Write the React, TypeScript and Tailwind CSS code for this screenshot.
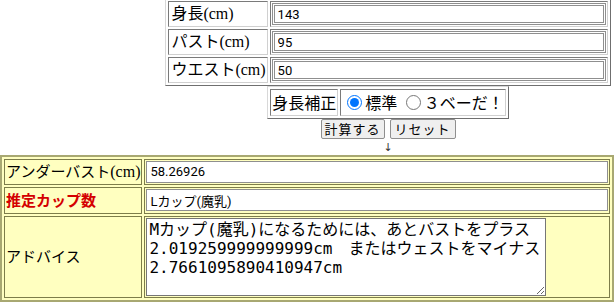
import type { ReactNode } from 'react'

const serifJa = "font-['Liberation_Serif','Noto_Sans_CJK_JP',serif]"

function SizeRow({ label, value }: { label: string; value: string }) {
  return (
    <tr>
      <td className="border border-t-[#7a7a7a] border-l-[#7a7a7a] border-b-[#d0d0d0] border-r-[#d0d0d0] p-px pl-[2px] text-[16px] leading-[22px] text-black whitespace-nowrap">
        {label}
      </td>
      <td className="border border-t-[#7a7a7a] border-l-[#7a7a7a] border-b-[#d0d0d0] border-r-[#d0d0d0] p-px">
        <input
          readOnly
          value={value}
          className="block h-[22px] w-[334px] border-[3px] border-double border-[#8f8f8f] bg-white px-[3px] font-['Roboto',sans-serif] text-[13px] text-black outline-none"
        />
      </td>
    </tr>
  )
}

function ResultRow({ label, children }: { label: ReactNode; children: ReactNode }) {
  return (
    <tr>
      <td className="border border-[#7d7d4a] bg-[#ffffc0] p-px pl-px text-[15px] leading-[22px] text-black whitespace-nowrap">
        {label}
      </td>
      <td className="w-full border border-[#7d7d4a] bg-[#ffffc0] p-px">{children}</td>
    </tr>
  )
}

export default function App() {
  return (
    <div className={`h-[305px] w-[614px] overflow-hidden bg-white ${serifJa}`}>
      <div className="-mt-[2px] ml-[166px] flex w-[444px] flex-col items-center">
        <table className="w-full border-separate border-spacing-[2px] border border-t-[#d8d8d8] border-l-[#d8d8d8] border-b-[#6f6f6f] border-r-[#6f6f6f]">
          <tbody>
            <SizeRow label="身長(cm)" value="143" />
            <SizeRow label="パスト(cm)" value="95" />
            <SizeRow label="ウエスト(cm)" value="50" />
          </tbody>
        </table>

        <table className="border-separate border-spacing-[2px] border border-t-[#d8d8d8] border-l-[#d8d8d8] border-b-[#6f6f6f] border-r-[#6f6f6f] font-['Noto_Sans_CJK_JP',sans-serif] text-[16px] leading-[22px]">
          <tbody>
            <tr>
              <td className="border border-t-[#7a7a7a] border-l-[#7a7a7a] border-b-[#d0d0d0] border-r-[#d0d0d0] px-px py-px whitespace-nowrap">
                身長補正
              </td>
              <td className="border border-t-[#7a7a7a] border-l-[#7a7a7a] border-b-[#d0d0d0] border-r-[#d0d0d0] px-px py-px whitespace-nowrap">
                <label className="inline-flex items-center">
                  <input type="radio" name="hosei" defaultChecked className="ml-[5px] mr-[3px] h-[15px] w-[15px] accent-[#0075ff]" />
                  標準
                </label>{' '}
                <label className="inline-flex items-center">
                  <input type="radio" name="hosei" className="ml-[5px] mr-[3px] h-[15px] w-[15px]" />
                  ３ベーだ！
                </label>
              </td>
            </tr>
          </tbody>
        </table>

        <div className="flex gap-[5px] font-['Noto_Sans_CJK_JP',sans-serif] text-[13px]">
          <button className="h-[20px] w-[64px] rounded-[2px] border border-[#8f8f8f] bg-[#efefef] leading-[18px] tracking-[1px] text-black">
            計算する
          </button>
          <button className="h-[20px] w-[66px] rounded-[2px] border border-[#8f8f8f] bg-[#efefef] leading-[18px] tracking-[1px] text-black">
            リセット
          </button>
        </div>

        <div className="h-[16px] font-['DejaVu_Sans',sans-serif] text-[11px] leading-[18px] text-[#333]">↓</div>
      </div>

      <table className="w-full border-separate border-spacing-[2px] border-[2px] border-[#a8a872] bg-[#ffffc0]">
        <tbody>
          <ResultRow
            label={
              <>
                アンダーバスト<span className="text-[16px]">(cm)</span>
              </>
            }
          >
            <input
              readOnly
              value="58.26926"
              className="block h-[22px] w-full border border-[#8f8f8f] bg-white px-[3px] font-['Roboto',sans-serif] text-[13px] text-black outline-none"
            />
          </ResultRow>
          <ResultRow
            label={
              <span className="font-['Noto_Sans_CJK_JP',sans-serif] font-bold text-[#d40000]">推定カップ数</span>
            }
          >
            <input
              readOnly
              value="Lカップ(魔乳)"
              className="block h-[22px] w-full border border-[#8f8f8f] bg-white px-[3px] font-['Roboto','Noto_Sans_CJK_JP',sans-serif] text-[13px] text-black outline-none"
            />
          </ResultRow>
          <ResultRow label="アドバイス">
            <textarea
              readOnly
              value={'Mカップ(魔乳)になるためには、あとバストをプラス\n2.019259999999999cm　またはウェストをマイナス\n2.7661095890410947cm'}
              className="block h-[78px] w-[400px] resize-y border border-[#767676] bg-white px-[2px] py-px font-['DejaVu_Sans_Mono','Noto_Sans_CJK_JP',monospace] text-[16px] leading-[19px] text-black outline-none"
            />
          </ResultRow>
        </tbody>
      </table>
    </div>
  )
}
